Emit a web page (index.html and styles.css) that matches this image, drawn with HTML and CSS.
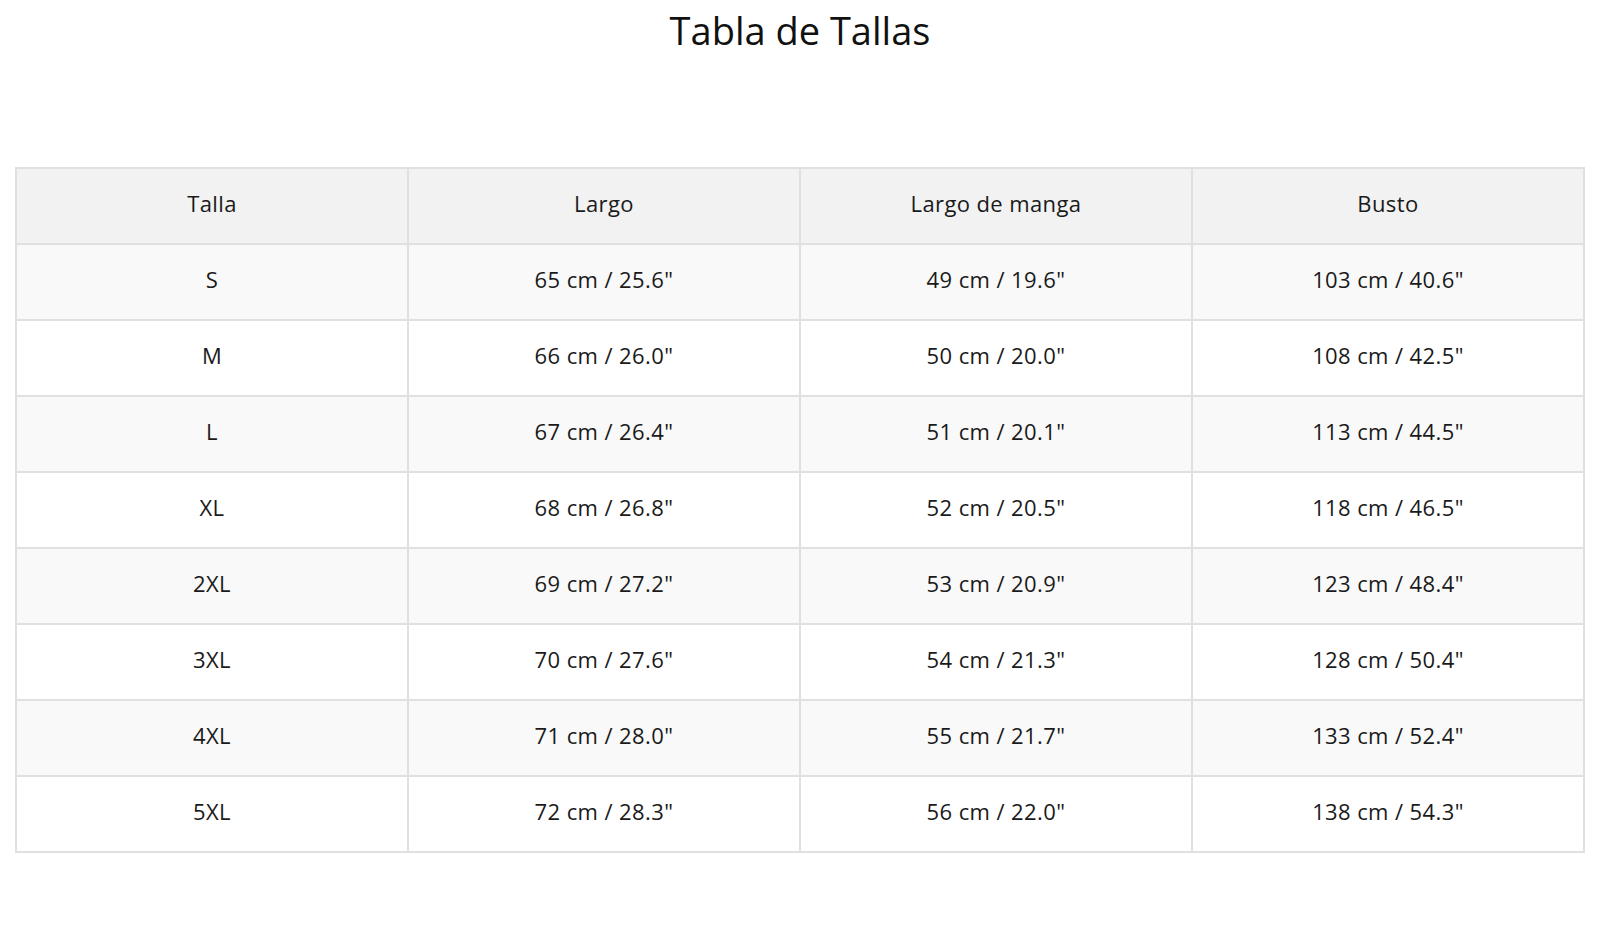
FILE: index.html
```html
<!DOCTYPE html>
<html lang="es">
<head>
<meta charset="utf-8">
<title>Tabla de Tallas</title>
<link rel="stylesheet" href="styles.css">
</head>
<body>
<main class="page">
  <h1 class="title">Tabla de Tallas</h1>
  <table class="size-table">
    <thead>
      <tr><th>Talla</th><th>Largo</th><th>Largo de manga</th><th>Busto</th></tr>
    </thead>
    <tbody>
      <tr><td>S</td><td>65 cm / 25.6"</td><td>49 cm / 19.6"</td><td>103 cm / 40.6"</td></tr>
      <tr><td>M</td><td>66 cm / 26.0"</td><td>50 cm / 20.0"</td><td>108 cm / 42.5"</td></tr>
      <tr><td>L</td><td>67 cm / 26.4"</td><td>51 cm / 20.1"</td><td>113 cm / 44.5"</td></tr>
      <tr><td>XL</td><td>68 cm / 26.8"</td><td>52 cm / 20.5"</td><td>118 cm / 46.5"</td></tr>
      <tr><td>2XL</td><td>69 cm / 27.2"</td><td>53 cm / 20.9"</td><td>123 cm / 48.4"</td></tr>
      <tr><td>3XL</td><td>70 cm / 27.6"</td><td>54 cm / 21.3"</td><td>128 cm / 50.4"</td></tr>
      <tr><td>4XL</td><td>71 cm / 28.0"</td><td>55 cm / 21.7"</td><td>133 cm / 52.4"</td></tr>
      <tr><td>5XL</td><td>72 cm / 28.3"</td><td>56 cm / 22.0"</td><td>138 cm / 54.3"</td></tr>
    </tbody>
  </table>
</main>
</body>
</html>
```
FILE: styles.css
```css
html, body {
  margin: 0;
  padding: 0;
  background: #ffffff;
}
body {
  font-family: "Open Sans", "Noto Sans", sans-serif;
  color: #1a1a1a;
}
.page {
  padding: 5px 15px 0;
}
.title {
  margin: 0;
  font-size: 38px;
  font-weight: 400;
  line-height: 50px;
  text-align: center;
  color: #111111;
}
.size-table {
  width: 100%;
  margin-top: 112px;
  border-collapse: collapse;
  table-layout: fixed;
  font-size: 22px;
  letter-spacing: 0.4px;
}
.size-table th,
.size-table td {
  border: 2px solid #e0e0e0;
  height: 76px;
  padding: 0 8px 6px;
  box-sizing: border-box;
  text-align: center;
  vertical-align: middle;
  font-weight: 400;
  line-height: 26px;
}
.size-table thead th {
  background: #f2f2f2;
}
.size-table tbody tr:nth-child(odd) td {
  background: #f9f9f9;
}
.size-table tbody tr:nth-child(even) td {
  background: #ffffff;
}
```
